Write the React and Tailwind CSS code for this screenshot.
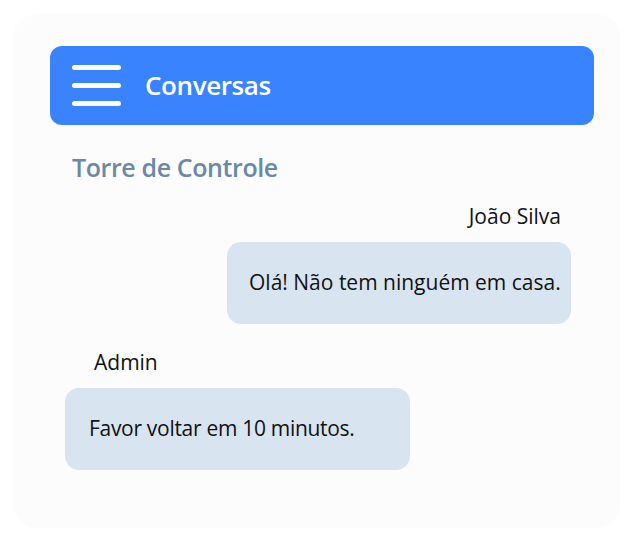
export default function App() {
  return (
    <div className="w-[634px] h-[540px] bg-white p-[14px] font-['Open_Sans',sans-serif]">
      <div className="h-[514px] rounded-[22px] bg-[#fcfcfd] pt-[32px] pl-[36px] pr-[26px]">
        <div className="h-[79px] rounded-[12px] bg-[#3a83fe] flex items-center px-[22px] gap-[24px]">
          <div className="flex flex-col gap-[13px]">
            <div className="w-[49px] h-[5px] rounded-full bg-white" />
            <div className="w-[49px] h-[5px] rounded-full bg-white" />
            <div className="w-[49px] h-[5px] rounded-full bg-white" />
          </div>
          <span className="text-white text-[26px] font-semibold tracking-[-0.4px]">Conversas</span>
        </div>

        <div className="mt-[27px] ml-[22px] text-[25px] font-semibold text-[#6c88a4] leading-[30px] tracking-[-0.4px]">
          Torre de Controle
        </div>

        <div className="mt-[21px] flex flex-col items-end pr-[23px]">
          <div className="text-[21px] text-[#111] leading-[26px] pr-[10px]">João Silva</div>
          <div className="mt-[13px] w-[344px] h-[82px] rounded-[14px] bg-[#d8e5f1] flex items-center pl-[22px] text-[21px] text-[#111]">
            Olá! Não tem ninguém em casa.
          </div>
        </div>

        <div className="mt-[25px] flex flex-col items-start pl-[15px]">
          <div className="text-[21px] text-[#111] leading-[26px] pl-[29px]">Admin</div>
          <div className="mt-[13px] w-[345px] h-[82px] rounded-[14px] bg-[#d8e5f1] flex items-center pl-[24px] text-[21px] text-[#111] tracking-[-0.3px]">
            Favor voltar em 10 minutos.
          </div>
        </div>
      </div>
    </div>
  );
}
